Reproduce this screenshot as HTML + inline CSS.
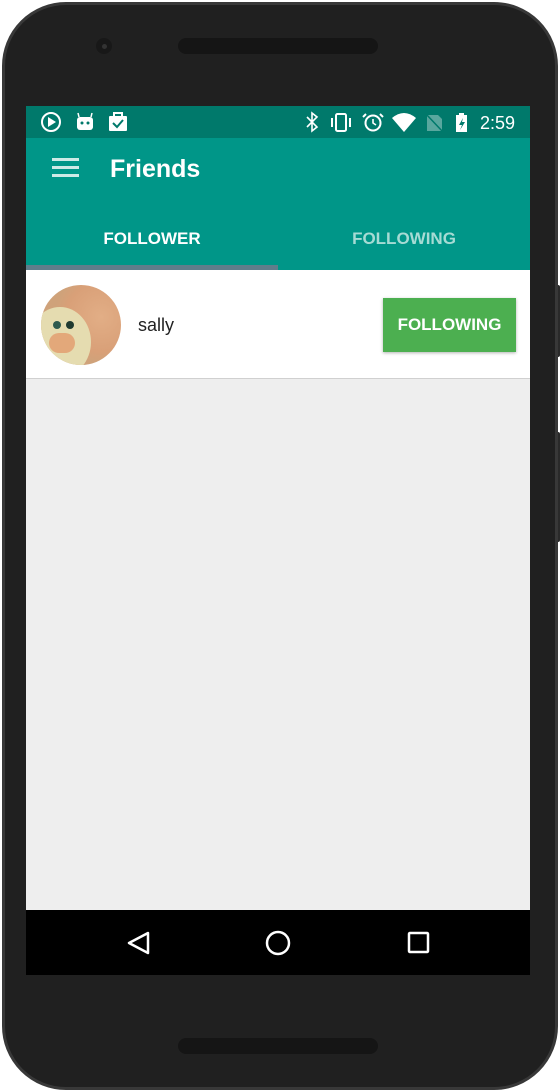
<!DOCTYPE html>
<html><head><style>
*{margin:0;padding:0;box-sizing:border-box}
body{width:560px;height:1092px;background:#fff;position:relative;overflow:hidden;font-family:"Liberation Sans",Roboto,sans-serif}
.phone{position:absolute;left:2px;top:2px;width:556px;height:1088px;background:#202020;border-radius:64px;border:3px solid #383838}
.btn{position:absolute;background:#2a2a2a}
.screen{position:absolute;left:26px;top:106px;width:504px;height:869px;background:#eeeeee;overflow:hidden}
.status{height:32px;background:#00796b;position:relative;color:#fff}
.bar{height:132px;background:#009688;position:relative;color:#fff}
.spk{position:absolute;left:178px;top:38px;width:200px;height:16px;border-radius:8px;background:#151515}
.spk2{top:1038px}
</style></head><body>
<div class="btn" style="left:554px;top:285px;width:6px;height:72px;border-radius:2px"></div>
<div class="btn" style="left:554px;top:432px;width:6px;height:110px;border-radius:2px"></div>
<div class="phone"></div>
<div class="spk"></div>
<div class="spk spk2"></div>
<div style="position:absolute;left:96px;top:38px;width:16px;height:16px;border-radius:50%;background:#181818"></div>
<div style="position:absolute;left:102px;top:44px;width:5px;height:5px;border-radius:50%;background:#333"></div>
<div class="screen">
 <div class="status">
  <svg width="504" height="32" style="position:absolute;left:0;top:0">
   <circle cx="25" cy="16" r="9" fill="none" stroke="#fff" stroke-width="2"/>
   <path d="M22 11 L30 16 L22 21Z" fill="#fff"/>
   <rect x="51" y="11" width="16" height="13" rx="3" fill="#fff"/>
   <circle cx="56" cy="17" r="1.5" fill="#00796b"/><circle cx="62" cy="17" r="1.5" fill="#00796b"/>
   <path d="M53 11 L52 7 M65 11 L66 7" stroke="#fff" stroke-width="1.5"/>
   <rect x="83" y="10" width="18" height="15" rx="1" fill="#fff"/>
   <path d="M88 10 V7 H96 V10" stroke="#fff" stroke-width="2" fill="none"/>
   <path d="M87 17 L91 21 L97 14" stroke="#00796b" stroke-width="2" fill="none"/>
   <path d="M281 11 L291 21 L286 25 V7 L291 11 L281 21" stroke="#fff" stroke-width="1.6" fill="none"/>
   <rect x="310" y="8" width="10" height="17" rx="1.5" fill="none" stroke="#fff" stroke-width="2"/>
   <path d="M306 12 V21 M324 12 V21" stroke="#fff" stroke-width="2"/>
   <circle cx="347" cy="17" r="7.5" fill="none" stroke="#fff" stroke-width="2"/>
   <path d="M347 13 V17 L350 19" stroke="#fff" stroke-width="1.6" fill="none"/>
   <path d="M340 8 L337 11 M354 8 L357 11" stroke="#fff" stroke-width="2"/>
   <path d="M366 12 Q378 2 390 12 L378 26 Z" fill="#fff"/>
   <path d="M401 9 H412 L416 13 V25 H401Z" fill="#fff" opacity=".35"/>
   <path d="M400 8 L417 26" stroke="#00796b" stroke-width="1.5"/>
   <rect x="430" y="9" width="11" height="17" fill="#fff"/><rect x="433" y="7" width="5" height="3" fill="#fff"/>
   <path d="M437 12 L433 19 H436 L434 24 L439 16 H436Z" fill="#00796b"/>
   <text x="454" y="23" font-family="Liberation Sans,sans-serif" font-size="18" fill="#fff">2:59</text>
  </svg>
 </div>
 <div class="bar">
  <div style="position:absolute;left:26px;top:20px;width:27px;height:2.5px;background:#cdeae6;box-shadow:0 8px 0 #cdeae6,0 16px 0 #cdeae6"></div>
  <div style="position:absolute;left:84px;top:14px;font-size:25px;font-weight:bold;line-height:34px">Friends</div>
  <div style="position:absolute;left:0;top:91px;width:252px;text-align:center;font-size:17px;font-weight:bold">FOLLOWER</div>
  <div style="position:absolute;left:252px;top:91px;width:252px;text-align:center;font-size:17px;font-weight:bold;color:#a6dbd4">FOLLOWING</div>
  <div style="position:absolute;left:0;top:127px;width:252px;height:5px;background:#607d8b"></div>
 </div>
 <div style="height:109px;background:#fff;border-bottom:1px solid #d0d0d0;position:relative">
  <div style="position:absolute;left:15px;top:15px;width:80px;height:80px;border-radius:50%;background:radial-gradient(circle at 75% 40%,#e2ae86 0,#d9a078 45%,#cfa27a 60%),#d9a078;overflow:hidden">
   <div style="position:absolute;left:-12px;top:22px;width:62px;height:70px;border-radius:50%;background:#e5dcb0"></div>
   <div style="position:absolute;left:12px;top:36px;width:8px;height:8px;border-radius:50%;background:#2e5a4e"></div>
   <div style="position:absolute;left:25px;top:36px;width:8px;height:8px;border-radius:50%;background:#1f3a30"></div>
   <div style="position:absolute;left:8px;top:48px;width:26px;height:20px;border-radius:10px;background:#e3a87a"></div>
  </div>
  <div style="position:absolute;left:112px;top:45px;font-size:18px;color:#222">sally</div>
  <div style="position:absolute;left:357px;top:28px;width:133px;height:54px;background:#4caf50;box-shadow:0 1px 3px rgba(0,0,0,.3);color:#fff;font-size:17px;font-weight:bold;text-align:center;line-height:54px">FOLLOWING</div>
 </div>
 <div style="position:absolute;left:0;top:804px;width:504px;height:65px;background:#000">
  <svg width="504" height="65">
   <path d="M122 23 L103 33 L122 43Z" fill="none" stroke="#fff" stroke-width="2.5" stroke-linejoin="round"/>
   <circle cx="252" cy="33" r="11" fill="none" stroke="#fff" stroke-width="2.5"/>
   <rect x="383" y="23" width="19" height="19" rx="1" fill="none" stroke="#fff" stroke-width="2.5"/>
  </svg>
 </div>
</div>
</body></html>
